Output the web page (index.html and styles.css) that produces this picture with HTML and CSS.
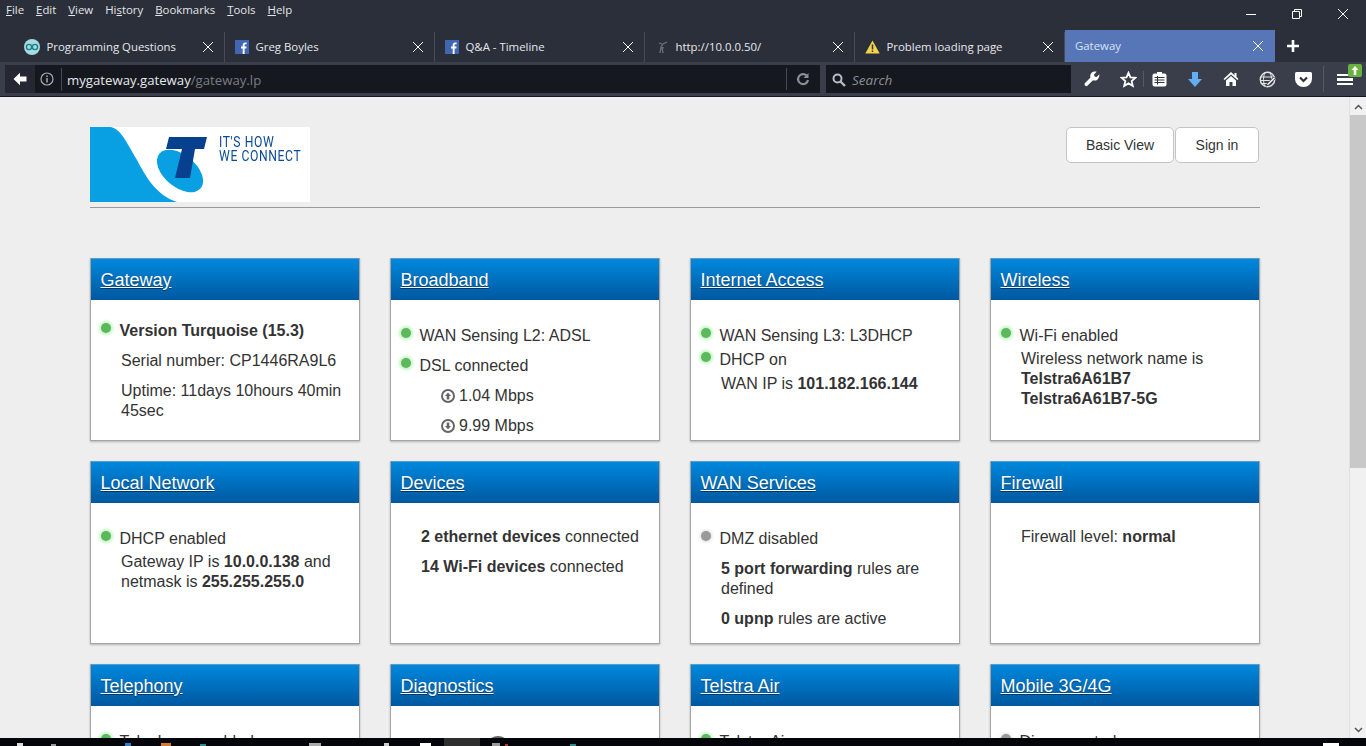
FILE: index.html
```html
<!DOCTYPE html>
<html lang="en">
<head>
    <meta charset="UTF-8">
    <meta name="viewport" content="width=device-width, initial-scale=1.0">
    <title>Gateway</title>
    <link rel="stylesheet" href="styles.css">
</head>
<body>
    <div class="chrome">
        <div class="menubar">
            <div class="menus">
                <span><u>F</u>ile</span>
                <span><u>E</u>dit</span>
                <span><u>V</u>iew</span>
                <span>Hi<u>s</u>tory</span>
                <span><u>B</u>ookmarks</span>
                <span><u>T</u>ools</span>
                <span><u>H</u>elp</span>
            </div>
            <div class="winbtns">
                <svg width="12" height="12" viewBox="0 0 12 12"><path d="M1 6.500h10" stroke="#fff" fill="none"/></svg>
                <svg width="12" height="12" viewBox="0 0 12 12"><path d="M1.500 3.500h7v7h-7zM3.500 3.500v-2h7v7h-2" stroke="#fff" fill="none"/></svg>
                <svg width="12" height="12" viewBox="0 0 12 12"><path d="M1 1l10 10M11 1L1 11" stroke="#fff" fill="none"/></svg>
            </div>
        </div>
        <div class="tabbar">
            <div class="tab">
                <svg class="favicon" width="16" height="16" viewBox="0 0 16 16"><circle cx="8" cy="8" r="8" fill="#a6dbe2"/><circle cx="5" cy="8" r="2.600" fill="none" stroke="#1b7f8c" stroke-width="1.400"/><circle cx="11" cy="8" r="2.600" fill="none" stroke="#1b7f8c" stroke-width="1.400"/></svg>
                <span class="tab-title">Programming Questions</span>
                <svg class="tab-x" width="12" height="12" viewBox="0 0 12 12"><path d="M1 1l10 10M11 1L1 11" stroke="#fff" fill="none"/></svg>
            </div>
            <div class="tab">
                <svg class="favicon" width="14" height="14" viewBox="0 0 14 14"><rect width="14" height="14" fill="#4267b2"/><path d="M9.600 14V8.600h1.700l.3-2H9.600V5.300c0-.6.2-1 1-1h1V2.500c-.3 0-.8-.1-1.400-.1-1.500 0-2.500.9-2.500 2.600v1.600H6v2h1.700V14z" fill="#fff"/></svg>
                <span class="tab-title">Greg Boyles</span>
                <svg class="tab-x" width="12" height="12" viewBox="0 0 12 12"><path d="M1 1l10 10M11 1L1 11" stroke="#fff" fill="none"/></svg>
            </div>
            <div class="tab">
                <svg class="favicon" width="14" height="14" viewBox="0 0 14 14"><rect width="14" height="14" fill="#4267b2"/><path d="M9.600 14V8.600h1.700l.3-2H9.600V5.300c0-.6.2-1 1-1h1V2.500c-.3 0-.8-.1-1.400-.1-1.500 0-2.500.9-2.500 2.600v1.600H6v2h1.700V14z" fill="#fff"/></svg>
                <span class="tab-title">Q&amp;A - Timeline</span>
                <svg class="tab-x" width="12" height="12" viewBox="0 0 12 12"><path d="M1 1l10 10M11 1L1 11" stroke="#fff" fill="none"/></svg>
            </div>
            <div class="tab">
                <svg class="favicon" width="14" height="14" viewBox="0 0 14 14"><path d="M5 13l1-6 2-3 4-2M6 7l3 1M8 13l-1-5M4 3l3 1" stroke="#6d7078" stroke-width="1.300" fill="none"/></svg>
                <span class="tab-title">http://10.0.0.50/</span>
                <svg class="tab-x" width="12" height="12" viewBox="0 0 12 12"><path d="M1 1l10 10M11 1L1 11" stroke="#fff" fill="none"/></svg>
            </div>
            <div class="tab">
                <svg class="favicon" width="15" height="14" viewBox="0 0 15 14"><path d="M7.500 .5L14.700 13.500H.3z" fill="#f3d34a"/><path d="M7.500 4.500v5M7.500 10.500v1.500" stroke="#333" stroke-width="1.500"/></svg>
                <span class="tab-title">Problem loading page</span>
                <svg class="tab-x" width="12" height="12" viewBox="0 0 12 12"><path d="M1 1l10 10M11 1L1 11" stroke="#fff" fill="none"/></svg>
            </div>
            <div class="tab tab-active">
                <span class="tab-title">Gateway</span>
                <svg class="tab-x" width="12" height="12" viewBox="0 0 12 12"><path d="M1 1l10 10M11 1L1 11" stroke="#fff" fill="none"/></svg>
            </div>
            <svg class="newtab" width="14" height="14" viewBox="0 0 14 14"><path d="M7 1v12M1 7h12" stroke="#fff" stroke-width="2.600" fill="none"/></svg>
        </div>
        <div class="navbar">
            <div class="urlbar">
                <div class="backbtn">
                    <svg width="14" height="14" viewBox="0 0 14 14"><path d="M.5 7L7 .8v3.700h6.500v5H7v3.700z" fill="#fff"/></svg>
                </div>
                <svg class="info" width="14" height="14" viewBox="0 0 14 14"><circle cx="7" cy="7" r="6" fill="none" stroke="#a9acb2" stroke-width="1.200"/><path d="M7 6v4.500M7 3.500v1.400" stroke="#a9acb2" stroke-width="1.500"/></svg>
                <span class="url"><b>mygateway.gateway</b>/gateway.lp</span>
                <div class="reload">
                    <svg width="14" height="14" viewBox="0 0 14 14"><path d="M12 8a5 5 0 1 1-1.500-4.500" fill="none" stroke="#8b8e94" stroke-width="2.200"/><path d="M12.500 1v5h-5z" fill="#8b8e94"/></svg>
                </div>
            </div>
            <div class="searchbar">
                <svg width="14" height="14" viewBox="0 0 14 14"><circle cx="5.500" cy="5.500" r="4" fill="none" stroke="#b9bcc2" stroke-width="2"/><path d="M8.500 8.500l4.500 4.500" stroke="#b9bcc2" stroke-width="2.400"/></svg>
                <span>Search</span>
            </div>
            <div class="tools">
                <svg class="tool-wrench" width="16" height="16" viewBox="0 0 16 16"><path d="M15.300 3.300l-2.700 2.700-2.100-.5-.5-2.100L12.700.7c-2-.6-4.100-.1-5.300 1.200-1.200 1.300-1.500 3-.9 4.500L1 12.100c-.7.8-.6 1.900.1 2.500.7.700 1.800.7 2.500 0l5.400-5.300c1.600.6 3.300.3 4.600-.9 1.400-1.300 2-3.300 1.700-5.100z" fill="#fff"/></svg>
                <svg class="tool-star" width="17" height="17" viewBox="0 0 17 17"><path d="M8.500 1.800l2 4.500 4.900.5-3.700 3.300 1.100 4.800-4.300-2.500-4.300 2.500 1.100-4.800L1.600 6.800l4.900-.5z" fill="none" stroke="#fff" stroke-width="1.800"/></svg>
                <span class="tool-sep"></span>
                <svg class="tool-clip" width="15" height="16" viewBox="0 0 15 16"><rect x=".5" y="2.500" width="14" height="13" rx="2" fill="#fff"/><rect x="5" y="1" width="5" height="3" fill="#fff"/><path d="M2.500 6.500h10M2.500 9h10M2.500 11.500h10" stroke="#30333d" stroke-width="1" fill="none"/><path d="M5.500 5v8.500" stroke="#30333d" stroke-width="1"/></svg>
                <svg class="tool-down" width="16" height="17" viewBox="0 0 16 17"><path d="M5 1h6v7h4l-7 8-7-8h4z" fill="#62aef5"/></svg>
                <svg class="tool-home" width="16" height="16" viewBox="0 0 16 16"><path d="M8 1L.5 8l1.200 1L8 3.500 14.300 9l1.200-1-2-1.900V2h-2v2.200z" fill="#fff"/><path d="M3 9.500L8 5l5 4.500V15H9.500v-4h-3v4H3z" fill="#fff"/></svg>
                <svg class="tool-globe" width="17" height="17" viewBox="0 0 17 17"><circle cx="8.500" cy="8.500" r="7.200" fill="#3a3e4a" stroke="#e4e4e4" stroke-width="1.400"/><path d="M2 6h13M2 9.500h13M1.800 12.500h9M6 1.800c-2 4-2 9 0 13.500M11 1.800c1.500 3 1.800 5.500 1.400 8" fill="none" stroke="#e4e4e4"/><path d="M6.800 15.500l1-3 7-7 2 2-7 7z" fill="#3a3e4a"/><path d="M8 14.300l.5-1.500L15 6.300l1 1-6.500 6.500z" fill="#fff"/></svg>
                <svg class="tool-pocket" width="17" height="15" viewBox="0 0 17 15"><path d="M1.500 0h14A1.500 1.500 0 0 1 17 1.500V7a8.500 8 0 0 1-17 0V1.500A1.500 1.500 0 0 1 1.500 0z" fill="#fff"/><path d="M5 5.500L8.500 9 12 5.500" stroke="#30333d" stroke-width="2.200" fill="none"/></svg>
                <span class="tool-sep tool-sep-menu"></span>
                <div class="hamburger">
                    <i></i><i></i><i></i>
                    <span class="update-badge">
                        <svg width="8" height="9" viewBox="0 0 8 9"><path d="M4 0l3.500 4H5.300v5H2.700V4H.5z" fill="#fff"/></svg>
                    </span>
                </div>
            </div>
        </div>
    </div>

    <div class="viewport">
        <div class="page">
            <header class="page-head">
                <div class="logo">
                    <svg class="logo-art" width="220" height="75" viewBox="0 0 220 75">
                        <path d="M0 0H20C30 1 36 14 47 33C56 50 66 68 87 75H0Z" fill="#09a0e3"/>
                        <ellipse cx="90" cy="44" rx="27" ry="16" transform="rotate(40 90 44)" fill="#09a0e3"/>
                        <path d="M79 10H117L114 22H105L100 51H85L92 22H76Z" fill="#07408e"/>
                    </svg>
                    <div class="logo-text">IT'S HOW<br>WE CONNECT</div>
                </div>
                <div class="head-btns">
                    <a class="btn btn-view">Basic View</a>
                    <a class="btn btn-sign">Sign in</a>
                </div>
            </header>

            <div class="cards">
                <section class="card">
                    <h3><a>Gateway</a></h3>
                    <div class="card-body body-tight">
                        <p class="row row-status"><i class="dot dot-on"></i><b>Version Turquoise (15.3)</b></p>
                        <p class="row row-gap">Serial number: CP1446RA9L6</p>
                        <p class="row row-gap">Uptime: 11days 10hours 40min 45sec</p>
                    </div>
                </section>
                <section class="card">
                    <h3><a>Broadband</a></h3>
                    <div class="card-body">
                        <p class="row row-status"><i class="dot dot-on"></i>WAN Sensing L2: ADSL</p>
                        <p class="row row-status row-gap"><i class="dot dot-on"></i>DSL connected</p>
                        <p class="row row-rate row-gap"><svg class="rate-icon" width="14" height="14" viewBox="0 0 14 14"><circle cx="7" cy="7" r="6" fill="none" stroke="#666" stroke-width="2"/><path d="M7 3.500L10 7H8.300v3.500H5.700V7H4z" fill="#666"/></svg>1.04 Mbps</p>
                        <p class="row row-rate row-gap"><svg class="rate-icon" width="14" height="14" viewBox="0 0 14 14"><circle cx="7" cy="7" r="6" fill="none" stroke="#666" stroke-width="2"/><path d="M7 10.500L10 7H8.300V3.500H5.700V7H4z" fill="#666"/></svg>9.99 Mbps</p>
                    </div>
                </section>
                <section class="card">
                    <h3><a>Internet Access</a></h3>
                    <div class="card-body">
                        <p class="row row-status"><i class="dot dot-on"></i>WAN Sensing L3: L3DHCP</p>
                        <p class="row row-status row-close"><i class="dot dot-on"></i>DHCP on</p>
                        <p class="row row-close">WAN IP is <b>101.182.166.144</b></p>
                    </div>
                </section>
                <section class="card">
                    <h3><a>Wireless</a></h3>
                    <div class="card-body">
                        <p class="row row-status"><i class="dot dot-on"></i>Wi-Fi enabled</p>
                        <p class="row row-near">Wireless network name is<br><b>Telstra6A61B7<br>Telstra6A61B7-5G</b></p>
                    </div>
                </section>
                <section class="card">
                    <h3><a>Local Network</a></h3>
                    <div class="card-body">
                        <p class="row row-status"><i class="dot dot-on"></i>DHCP enabled</p>
                        <p class="row row-near">Gateway IP is <b>10.0.0.138</b> and netmask is <b>255.255.255.0</b></p>
                    </div>
                </section>
                <section class="card">
                    <h3><a>Devices</a></h3>
                    <div class="card-body body-mid">
                        <p class="row"><b>2 ethernet devices</b> connected</p>
                        <p class="row row-gap"><b>14 Wi-Fi devices</b> connected</p>
                    </div>
                </section>
                <section class="card">
                    <h3><a>WAN Services</a></h3>
                    <div class="card-body">
                        <p class="row row-status"><i class="dot dot-off"></i>DMZ disabled</p>
                        <p class="row row-gap"><b>5 port forwarding</b> rules are defined</p>
                        <p class="row row-gap"><b>0 upnp</b> rules are active</p>
                    </div>
                </section>
                <section class="card">
                    <h3><a>Firewall</a></h3>
                    <div class="card-body body-mid">
                        <p class="row">Firewall level: <b>normal</b></p>
                    </div>
                </section>
                <section class="card">
                    <h3><a>Telephony</a></h3>
                    <div class="card-body">
                        <p class="row row-status"><i class="dot dot-on"></i>Telephony enabled</p>
                    </div>
                </section>
                <section class="card">
                    <h3><a>Diagnostics</a></h3>
                    <div class="card-body body-diag">
                        <i class="diag-icon"></i>
                    </div>
                </section>
                <section class="card">
                    <h3><a>Telstra Air</a></h3>
                    <div class="card-body">
                        <p class="row row-status"><i class="dot dot-on"></i>Telstra Air</p>
                    </div>
                </section>
                <section class="card">
                    <h3><a>Mobile 3G/4G</a></h3>
                    <div class="card-body">
                        <p class="row row-status"><i class="dot dot-off"></i>Disconnected</p>
                    </div>
                </section>
            </div>
        </div>
        <div class="scrollbar">
            <svg width="9" height="6" viewBox="0 0 9 6"><path d="M1 5l3.500-3.500L8 5" stroke="#555" stroke-width="1.500" fill="none"/></svg>
            <div class="scroll-thumb"></div>
            <div class="scroll-rest"></div>
            <svg width="9" height="6" viewBox="0 0 9 6"><path d="M1 1l3.500 3.500L8 1" stroke="#555" stroke-width="1.500" fill="none"/></svg>
        </div>
    </div>
    <div class="taskbar">
        <div class="task-active"></div>
    </div>
</body>
</html>
```

FILE: styles.css
```css
* {
    box-sizing: border-box;
}
html, body {
    height: 100%;
}
body {
    margin: 0;
    height: 746px;
    overflow: hidden;
    display: flex;
    flex-direction: column;
    font-family: "Liberation Sans", Arial, sans-serif;
    background: #eeeeee;
}

/* browser chrome */
.chrome {
    background: #2b2f3a;
    color: #fff;
    font-family: "Open Sans", sans-serif;
    font-size: 11.4px;
    flex: none;
}
.menubar {
    height: 30px;
    display: flex;
    justify-content: space-between;
    align-items: flex-start;
}
.menus {
    display: flex;
    gap: 12px;
    padding: 2px 0 0 6px;
    color: #e4e5e8;
    line-height: 16px;
}
.winbtns {
    display: flex;
    gap: 34px;
    padding: 8px 17px 0 0;
}
.tabbar {
    height: 32px;
    display: flex;
    align-items: stretch;
}
.tab {
    width: 210px;
    display: flex;
    align-items: center;
    padding: 0 10px 1px 24px;
    border-right: 1px solid #474b56;
    margin: 2px 0 0;
}
.tab:first-child {
    width: 225px;
}
.tab:nth-child(n+2) {
    padding-left: 10px;
}
.tab-title {
    flex: 1;
    margin-left: 6.5px;
    color: #e6e7ea;
}
.tab-active {
    background: #5676b8;
    border: 0;
    margin: 0;
    width: 210px;
    padding-left: 9px;
}
.tab-active .tab-title {
    margin-left: 0;
    color: #d8e2f5;
}
.tab-active .tab-x {
    margin-right: 1px;
}
.tab-x {
    flex: none;
}
.newtab {
    align-self: center;
    margin-left: 11px;
}
.navbar {
    height: 35px;
    background: #3a3e4a;
    display: flex;
    align-items: center;
    border-bottom: 1px solid #14161b;
    padding: 0 0 0 5px;
}
.urlbar {
    width: 815px;
    height: 28px;
    background: #15181e;
    display: flex;
    align-items: center;
}
.backbtn {
    width: 30px;
    height: 28px;
    background: #252832;
    display: flex;
    align-items: center;
    justify-content: center;
}
.info {
    margin-left: 5px;
}
.url {
    flex: 1;
    margin-left: 7px;
    padding-left: 5px;
    border-left: 1px solid #474b56;
    font-size: 13.2px;
    line-height: 22px;
    padding-top: 1px;
    color: #7a7d84;
}
.url b {
    font-weight: normal;
    color: #e6e7ea;
}
.reload {
    width: 34px;
    height: 22px;
    padding-right: 2px;
    border-left: 1px solid #474b56;
    display: flex;
    align-items: center;
    justify-content: center;
}
.searchbar {
    width: 245px;
    height: 28px;
    margin-left: 6px;
    background: #15181e;
    display: flex;
    align-items: center;
    gap: 6px;
    padding: 1px 0 0 6px;
    font-style: italic;
    font-size: 13.5px;
    color: #8b8e94;
}
.tools {
    flex: 1;
    display: flex;
    align-items: center;
    padding-left: 13px;
}
.tool-star {
    margin-left: 20px;
}
.tool-sep {
    width: 1px;
    height: 16px;
    background: #565a66;
    margin-left: 6px;
}
.tool-clip {
    margin-left: 8px;
}
.tool-down {
    margin-left: 20px;
}
.tool-home {
    margin-left: 20px;
}
.tool-globe {
    margin-left: 20px;
}
.tool-pocket {
    margin-left: 19px;
}
.tool-sep-menu {
    height: 26px;
    margin-left: 11px;
}
.hamburger {
    margin: 1px 0 0 13px;
    width: 16px;
    display: flex;
    flex-direction: column;
    gap: 2px;
    position: relative;
}
.hamburger i {
    display: block;
    height: 2.5px;
    background: #fff;
}
.update-badge {
    position: absolute;
    top: -10px;
    left: 11px;
    width: 14px;
    height: 13px;
    background: #68b33f;
    border-radius: 2px;
    display: flex;
    align-items: center;
    justify-content: center;
}

/* page area */
.viewport {
    flex: 1;
    min-height: 0;
    display: flex;
    overflow: hidden;
}
.page {
    flex: 1;
    min-width: 0;
    padding: 30px 89px 0 90px;
}
.page-head {
    height: 81px;
    border-bottom: 1px solid #999;
    display: flex;
    justify-content: space-between;
    align-items: flex-start;
}
.logo {
    width: 220px;
    height: 75px;
    background: #fff;
    position: relative;
}
.logo-art {
    display: block;
}
.logo-text {
    position: absolute;
    top: 9px;
    left: 129px;
    font-family: "Roboto", sans-serif;
    font-size: 14.5px;
    line-height: 14px;
    letter-spacing: 0.7px;
    color: #0a4a94;
    transform: scaleX(0.84);
    transform-origin: left top;
    white-space: nowrap;
}
.head-btns {
    display: flex;
    gap: 1px;
    margin-right: 1px;
}
.btn {
    height: 36px;
    display: flex;
    align-items: center;
    justify-content: center;
    background: #fff;
    border: 1px solid #c4c4c4;
    border-radius: 5px;
    font-size: 14px;
    color: #333;
}
.btn-view {
    width: 108px;
}
.btn-sign {
    width: 84px;
}
.cards {
    margin-top: 50px;
    display: grid;
    grid-template-columns: repeat(4, 270px);
    column-gap: 30px;
    row-gap: 20px;
}
.card {
    height: 183px;
    background: #fff;
    border: 1px solid #a5a5a5;
    border-top: 0;
    box-shadow: 0 1px 2px rgba(0, 0, 0, 0.25);
    overflow: hidden;
}
.card h3 {
    margin: 0 -1px;
    height: 42px;
    padding-left: 10.5px;
    background: linear-gradient(#0088dd, #0058a0);
    border-top: 1px solid #5d9cc8;
    font-size: 18px;
    font-weight: normal;
    line-height: 43px;
}
.card h3 a {
    color: #fff;
    text-decoration: underline;
    text-shadow: 0 1px 1px rgba(0, 0, 0, 0.45);
}
.card-body {
    padding: 26px 10px 0 30px;
    font-size: 16px;
    line-height: 20px;
    color: #333;
}
.body-tight {
    padding-top: 21px;
}
.body-mid {
    padding-top: 24px;
}
.body-diag {
    padding: 30px 0 0 95px;
}
.row {
    margin: 0;
    position: relative;
}
.row-gap {
    margin-top: 10px;
}
.row-close {
    margin-top: 4px;
}
.row-near {
    margin-top: 3px;
}
.row-status {
    margin-left: -1.5px;
}
.row-rate {
    display: flex;
    align-items: center;
    gap: 4px;
    padding-left: 20px;
}
.dot {
    position: absolute;
    left: -18.5px;
    top: 2px;
    width: 10px;
    height: 10px;
    border-radius: 50%;
}
.dot-on {
    background: #5cb85c;
    box-shadow: 0 0 3px 2px rgba(120, 230, 120, 0.45);
}
.dot-off {
    background: #999;
    box-shadow: 0 0 3px 1px rgba(150, 150, 150, 0.35);
}
.diag-icon {
    display: block;
    width: 24px;
    height: 24px;
    border-radius: 50%;
    background: #666;
}
.scrollbar {
    width: 17px;
    flex: none;
    background: #f1f1f1;
    border-left: 1px solid #e0e0e0;
    display: flex;
    flex-direction: column;
    align-items: center;
    padding: 7px 0 5px;
}
.scroll-thumb {
    width: 16px;
    height: 353px;
    margin-top: 5px;
    background: #c8c8c8;
}
.scroll-rest {
    flex: 1;
}

/* the top edge of the windows taskbar, icons are cut off by the window */
.taskbar {
    height: 8px;
    flex: none;
    display: flex;
    padding-left: 444px;
    background-color: #03050a;
    background-repeat: no-repeat;
    background-image:
        linear-gradient(#ddd, #ddd), linear-gradient(#999, #999), linear-gradient(#2f7fc4, #2f7fc4),
        linear-gradient(#d9772c, #d9772c), linear-gradient(#2a8f8f, #2a8f8f), linear-gradient(#aaa, #aaa),
        linear-gradient(#ccc, #ccc), linear-gradient(#fff, #fff), linear-gradient(#999, #999),
        linear-gradient(#b33, #b33), linear-gradient(#2a8f8f, #2a8f8f), linear-gradient(#fff, #fff);
    background-size:
        6px 3px, 5px 2px, 6px 3px,
        10px 3px, 6px 2px, 12px 3px,
        5px 3px, 11px 3px, 8px 3px,
        3px 2px, 6px 2px, 16px 3px;
    background-position:
        17px 5px, 51px 6px, 125px 5px,
        161px 5px, 200px 6px, 309px 5px,
        384px 5px, 420px 5px, 492px 5px,
        505px 6px, 570px 6px, 1323px 5px;
}
.task-active {
    width: 36px;
    height: 8px;
    background: #2e2e2e;
}
```
